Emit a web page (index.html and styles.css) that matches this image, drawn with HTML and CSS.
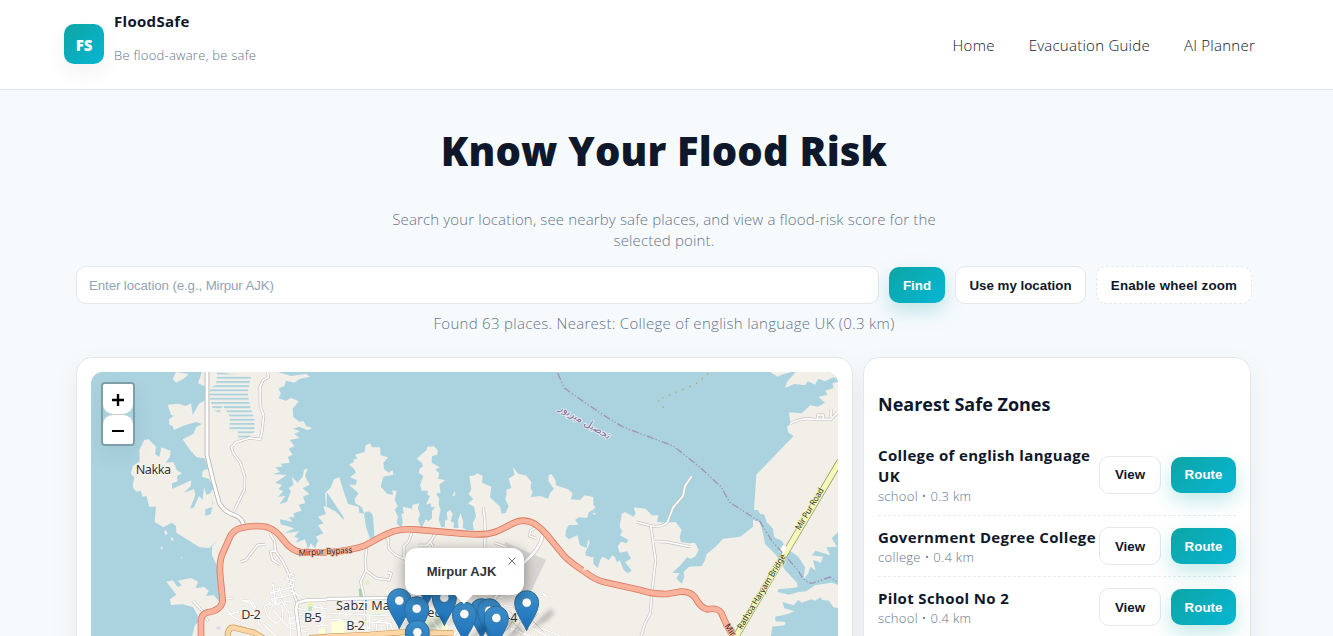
FILE: index.html
```html
<!DOCTYPE html>
<html lang="en">
<head>
    <meta charset="UTF-8">
    <title>FloodSafe</title>
    <link rel="stylesheet" href="styles.css">
</head>
<body>
    <header class="site-header">
        <div class="header-inner">
            <div class="brand">
                <div class="logo">FS</div>
                <div class="brand-text">
                    <div class="brand-name">FloodSafe</div>
                    <div class="brand-tag">Be flood-aware, be safe</div>
                </div>
            </div>
            <nav class="nav">
                <a>Home</a>
                <a>Evacuation Guide</a>
                <a>AI Planner</a>
            </nav>
        </div>
    </header>

    <main class="container">
        <section class="hero">
            <h1>Know Your Flood Risk</h1>
            <p class="lead">Search your location, see nearby safe places, and view a flood-risk score for the<br>selected point.</p>
        </section>

        <div class="search-row">
            <input class="search-input" type="text" placeholder="Enter location (e.g., Mirpur AJK)">
            <button class="btn primary find">Find</button>
            <button class="btn locate">Use my location</button>
            <button class="btn dashed wheel">Enable wheel zoom</button>
        </div>
        <p class="status">Found 63 places. Nearest: College of english language UK (0.3 km)</p>

        <div class="grid">
            <div class="card map-card">
                <div class="map">
                    <svg class="map-svg" viewBox="0 0 2241 792" width="747" height="264">
                        <defs>
                            <pattern id="wetland" width="20" height="12.6" patternUnits="userSpaceOnUse">
                                <rect width="20" height="5.6" fill="#aad3df"/>
                            </pattern>
                            <linearGradient id="pinFill" x1="0" y1="0" x2="0" y2="1">
                                <stop offset="0" stop-color="#3d8fcc"/>
                                <stop offset="1" stop-color="#1a6fb8"/>
                            </linearGradient>
                            <filter id="soft"><feGaussianBlur stdDeviation="7"/></filter>
                            <g id="pin">
                                <path d="M0,0 L45,-45 L72,-68 L84,-55 L60,-30 Z" fill="#000" opacity=".2" filter="url(#soft)"/>
                                <path d="M0,-2 C-8,-24 -36,-56 -36,-86 A36,36 0 0 1 36,-86 C36,-56 8,-24 0,-2 Z" fill="url(#pinFill)" stroke="#2e6c97" stroke-width="3"/>
                                <circle cx="0" cy="-86" r="14" fill="#fff" stroke="#2e6c97" stroke-width="2"/>
                            </g>
                        </defs>
                        <rect width="2241" height="792" fill="#aad3df"/>

                        <!-- west -->
                        <g transform="translate(-45 -36)">
                            <path class="land" d="M388,36 L605,36 L645,48 L690,42 L702,50 L672,56 L655,68 L630,62 L625,78 L607,86 L615,100 L607,115 L630,122 L645,113 L668,124 L650,146 L652,172 L672,186 L682,182 L690,198 L708,204 L696,211 L670,200 L650,206 L672,214 L655,222 L671,234 L641,240 L656,258 L638,266 L650,284 L636,291 L641,308 L614,311 L620,320 L598,322 L612,336 L590,342 L632,345 L598,368 L618,374 L608,388 L622,394 L606,410 L628,408 L611,432 L632,426 L645,394 L638,384 L652,375 L648,350 L664,368 L680,350 L684,330 L695,325 L687,348 L701,374 L680,385 L700,402 L681,410 L688,430 L668,434 L677,452 L652,460 L655,472 L637,472 L650,485 L612,478 L614,493 L655,505 L625,520 L670,514 L655,530 L668,535 L660,548 L686,538 L697,568 L704,550 L717,564 L727,540 L719,530 L742,520 L726,496 L743,490 L726,470 L750,462 L742,440 L757,438 L753,420 L775,412 L765,380 L774,358 L790,352 L810,420 L815,840 L345,840 L357,796 L372,780 L352,742 L320,733 L285,735 L282,718 L301,704 L271,665 L290,661 L306,682 L317,676 L305,662 L345,654 L366,665 L359,685 L384,680 L398,692 L390,708 L413,705 L430,726 L428,690 L424,620 L408,585 L408,560 L421,544 L400,564 L370,562 L340,542 L301,518 L300,498 L287,488 L262,502 L236,486 L240,440 L220,440 L211,408 L200,410 L194,392 L180,395 L170,380 L175,352 L165,342 L170,318 L191,304 L190,270 L204,241 L217,237 L240,260 L237,282 L250,291 L256,262 L284,272 L282,290 L268,308 L292,306 L302,330 L318,340 L303,348 L305,364 L288,370 L288,387 L346,361 L344,378 L324,398 L354,387 L358,404 L342,446 L354,442 L369,408 L380,420 L384,382 L391,404 L404,400 L411,440 L388,448 L388,468 L404,462 L412,430 L402,402 L414,380 L398,356 L378,350 L380,332 L396,326 L386,295 L362,292 L342,270 L320,238 L352,222 L360,202 L378,192 L360,186 L322,197 L294,210 L290,198 L280,194 L279,178 L293,168 L285,164 L275,134 L306,131 L330,138 L345,130 L350,165 L370,130 L386,122 Z"/>
                            <path class="land" d="M290,58 L300,36 L338,42 L325,55 L300,68 Z M366,70 L378,36 L390,36 L390,80 Z"/>
                            <path class="land" d="M264,515 l6,-4 5,10 -6,4 Z M284,532 l7,2 1,10 -6,-3 Z M252,563 l9,-3 -4,9 Z M316,590 l3,6 -4,-1 Z"/>
                            <path fill="url(#wetland)" d="M424,36 L525,50 L515,100 L522,140 L535,175 L536,214 L512,240 L488,238 L485,214 L460,210 L462,170 L440,136 L430,158 L412,150 L400,110 L402,84 L420,75 Z"/>

                            <rect x="695" y="727" width="14" height="14" fill="#eef7a9"/>
                            <rect x="697" y="739" width="11" height="14" fill="#b5e7c3"/>
                            <path d="M730,808 L748,802 L746,830 L726,830 Z" fill="#feffd9"/>
                            <path d="M422,800 h12 v8 h-12 Z" fill="#e3d2e6"/>

                            <g class="street-case">
                                <path d="M575,36 L577,52 L562,60 L552,80 L553,140 L563,166 L558,215 L552,238 L520,234 L480,247 L466,262 L472,280 L493,308 L506,350 L505,390 L473,455"/>
                                <path d="M493,606 L510,600 L545,555 L568,553"/>
                                <path d="M583,522 L596,545 L598,572 L622,607 L640,645 L652,700 L665,730"/>
                                <path d="M598,572 L583,575 L590,600 L612,614"/>
                                <path d="M350,722 L378,752 L397,785"/>
                            </g>
                            <g class="street">
                                <path d="M575,36 L577,52 L562,60 L552,80 L553,140 L563,166 L558,215 L552,238 L520,234 L480,247 L466,262 L472,280 L493,308 L506,350 L505,390 L473,455"/>
                                <path d="M493,606 L510,600 L545,555 L568,553"/>
                                <path d="M583,522 L596,545 L598,572 L622,607 L640,645 L652,700 L665,730"/>
                                <path d="M598,572 L583,575 L590,600 L612,614"/>
                                <path d="M350,722 L378,752 L397,785"/>
                            </g>
                            <g class="lane">
                                <path d="M440,716 H470 M440,735 L470,770 L500,785 L540,828 M450,765 L490,755 M498,722 L525,730 L545,765 L550,800 M500,722 Q530,715 540,745 M480,790 L520,820 M505,740 L498,775 L535,770"/>
                                <path d="M565,740 L590,722 L618,740 L620,775 L600,790 L575,770 Z M590,750 L640,805 M560,790 L600,830 M615,720 L640,760 L645,828"/>
                                <path d="M580,700 L655,680 M583,718 L660,700 M590,670 L600,735 M610,680 L618,715 M632,640 L655,648 M628,655 L658,662 M636,670 L655,676 M640,690 L680,712 M575,735 L650,722"/>
                                <path d="M665,745 L690,750 M665,762 L680,765 M660,780 L690,785 M664,797 L690,800 M668,812 L695,814 M640,775 L668,772 M640,790 L668,788 M642,806 L668,803 M738,735 V800 M755,725 V820 M710,740 L780,752 M738,770 L780,776 M720,795 L780,800"/>
                            </g>
                            <path class="main-case" d="M393,30 L393,285 L412,365 L430,430 Q445,455 472,464 Q498,472 503,496"/>
                            <path class="main" d="M393,30 L393,285 L412,365 L430,430 Q445,455 472,464 Q498,472 503,496"/>
                            <path class="local-case" d="M790,719 L690,721 L665,728 L660,745 L672,840"/>
                            <path class="local" d="M790,719 L690,721 L665,728 L660,745 L672,840"/>
                            <path class="secondary-case" d="M455,840 Q452,800 475,803 L535,818 L570,840 M700,834 L800,828"/>
                            <path class="secondary" d="M455,840 Q452,800 475,803 L535,818 L570,840 M700,834 L800,828"/>
                            <path class="trunk-case" d="M375,840 L375,785 Q375,764 392,758 Q436,752 440,722 L432,640 Q430,600 440,580 L460,535 Q470,510 495,504 Q540,493 575,502 Q600,510 622,540 Q650,577 680,577 L763,577"/>
                            <path class="trunk" d="M375,840 L375,785 Q375,764 392,758 Q436,752 440,722 L432,640 Q430,600 440,580 L460,535 Q470,510 495,504 Q540,493 575,502 Q600,510 622,540 Q650,577 680,577 L763,577"/>
                        </g>

                        <!-- center -->
                        <g transform="translate(717 -36)">
                            <path class="land" d="M-15,400 L10,375 L12,356 L30,372 L42,398 L54,432 L86,440 L88,458 L104,462 L94,440 L76,430 L74,416 L86,400 L57,374 L78,374 L80,360 L60,352 L78,338 L72,326 L57,314 L72,306 L70,296 L82,298 L75,284 L104,276 L107,256 L120,250 L126,262 L150,262 L152,286 L174,292 L160,308 L162,328 L176,338 L188,330 L190,344 L160,350 L152,380 L172,402 L190,404 L186,390 L200,394 L194,420 L203,438 L194,450 L204,470 L200,490 L214,504 L218,484 L214,462 L222,460 L218,440 L246,446 L248,434 L268,430 L264,446 L270,462 L264,480 L274,504 L284,486 L286,478 L296,484 L306,474 L306,452 L316,440 L304,442 L302,430 L288,434 L300,408 L292,404 L294,392 L276,392 L270,376 L280,348 L266,338 L270,324 L278,320 L276,308 L260,296 L290,270 L292,260 L312,259 L323,270 L322,284 L306,288 L305,308 L330,322 L316,328 L328,340 L324,356 L346,360 L328,374 L332,398 L318,400 L328,416 L326,434 L332,450 L326,478 L334,502 L345,500 L345,482 L353,478 L350,458 L360,449 L368,462 L362,484 L372,488 L370,503 L386,504 L384,480 L392,460 L400,486 L398,504 L412,511 L432,511 L428,490 L438,470 L432,440 L414,430 L430,418 L416,402 L424,388 L418,348 L436,346 L440,339 L458,348 L456,368 L484,380 L480,412 L494,425 L510,440 L515,462 L528,458 L536,438 L526,418 L530,402 L528,390 L544,384 L536,356 L554,344 L548,322 L566,342 L588,346 L604,366 L602,384 L608,396 L602,412 L630,408 L654,416 L662,396 L672,388 L655,362 L656,346 L664,342 L676,360 L678,376 L714,388 L728,400 L722,418 L750,420 L764,406 L790,412 L790,840 L-10,840 L-10,470 Z"/>
                            <path class="water" d="M103,470 Q102,452 118,455 Q130,460 130,480 L133,530 L120,536 L108,500 Z M-10,395 L40,470 L42,480 L18,455 L-10,440 Z"/>
                            <path class="land" d="M374,392 l2,14 -9,3 Z"/>
                            <path class="water" d="M790,448 L776,452 L772,474 L746,472 L735,480 L746,494 L716,496 L708,510 L706,528 L716,538 L742,526 L750,556 L770,564 L774,540 L790,530 Z M790,560 L782,562 L766,588 L784,588 Z"/>
                            <path d="M526,546 L648,600 L600,700 L480,680 Z" fill="#d9d5d2"/>
                            <path d="M86,686 L100,684 L103,712 L88,712 Z" fill="#aad0af"/>
                            <circle cx="112" cy="668" r="8" fill="#e7eecb"/>
                            <path d="M4,785 L45,782 L48,818 L6,820 Z M325,790 L355,795 L352,812 L325,808 Z" fill="#feffd9"/>
                            <path d="M275,772 L330,766 L338,806 L280,802 Z" fill="#dbe8cf"/>

                            <g class="street-case">
                                <path d="M110,562 L106,600 L108,630 L92,665 L98,690 L103,715 L103,790"/>
                                <path d="M106,630 L140,655 L178,660 L184,640 L172,638"/>
                                <path d="M174,528 L176,565 L196,585 L230,600 M246,516 L236,545 L222,558 L222,595 M316,520 L305,540 L290,556 L265,556 M300,545 L310,560"/>
                                <path d="M460,442 L465,490 L464,640 M494,548 L530,562 M618,502 L602,512 L598,528 L620,535"/>
                            </g>
                            <g class="street">
                                <path d="M110,562 L106,600 L108,630 L92,665 L98,690 L103,715 L103,790"/>
                                <path d="M106,630 L140,655 L178,660 L184,640 L172,638"/>
                                <path d="M174,528 L176,565 L196,585 L230,600 M246,516 L236,545 L222,558 L222,595 M316,520 L305,540 L290,556 L265,556 M300,545 L310,560"/>
                                <path d="M460,442 L465,490 L464,640 M494,548 L530,562 M618,502 L602,512 L598,528 L620,535"/>
                            </g>
                            <g class="lane">
                                <path d="M0,735 L20,735 M0,760 L180,768 M0,778 L185,790 M60,725 V760 M120,765 L118,812 M140,812 Q135,782 156,780 Q178,782 172,812 M156,795 v20 M180,790 L190,812 M70,800 L130,806"/>
                                <path d="M305,760 L380,765 M305,780 L330,812 M370,790 Q392,800 372,828 M420,700 L520,705 M500,715 L560,700 L590,720 M520,735 L570,745 M515,820 L560,770 M530,800 L600,828 M560,780 L650,828 M540,820 L580,750 M630,690 L655,716 M625,712 L650,705 M600,790 L690,828 M590,815 L640,760"/>
                            </g>
                            <path class="local-case" d="M-10,717 L180,714 M636,528 Q635,560 585,605 L490,720"/>
                            <path class="local" d="M-10,717 L180,714 M636,528 Q635,560 585,605 L490,720"/>
                            <g stroke="#c9c4c0" stroke-width="3">
                                <path d="M548,740 L600,790 M536,752 L596,808 M530,768 L580,818 M556,728 L640,815 M530,810 L580,735 M548,820 L600,745 M570,828 L625,760"/>
                            </g>
                            <path class="secondary-case" d="M-10,830 L120,824 L240,815 L370,820"/>
                            <path class="secondary" d="M-10,830 L120,824 L240,815 L370,820"/>
                            <path class="trunk-case" d="M0,577 Q70,570 105,557 Q160,525 190,514 Q220,505 260,509 L400,521 Q465,527 495,516 Q515,509 545,492 Q580,472 615,492 Q635,505 650,524 L700,585 Q715,603 766,637"/>
                            <path class="trunk" d="M-3,577 Q70,570 105,557 Q160,525 190,514 Q220,505 260,509 L400,521 Q465,527 495,516 Q515,509 545,492 Q580,472 615,492 Q635,505 650,524 L700,585 Q715,603 766,637"/>
                        </g>

                        <!-- east -->
                        <g transform="translate(1482 -36)">
                            <path class="water" d="M24,460 H120 V560 L24,575 Z"/>
                            <path class="land" d="M-5,412 L14,408 L18,428 L32,442 L10,458 L-5,452 Z M22,460 l10,-2 -3,7 Z"/>
                            <path class="water" d="M24,470 L6,520 L14,550 L0,580 L16,592 L26,590 Z"/>
                            <path class="land" d="M0,590 L12,596 L8,616 L26,612 L38,624 L46,600 L52,590 L72,600 L82,586 L90,592 L96,608 L104,600 L116,630 L128,640 L140,632 L120,606 L138,596 L126,574 L104,578 L98,558 L108,545 L124,550 L130,540 L105,526 L112,515 L104,500 L110,462 L120,456 L145,470 L152,462 L146,442 L182,446 L200,466 L220,466 L216,486 L244,488 L272,486 L290,510 L284,530 L288,546 L312,550 L330,548 L341,570 L332,588 L318,596 L306,592 L290,612 L262,638 L284,640 L274,655 L290,671 L298,650 L296,636 L312,620 L350,618 L360,600 L365,582 L392,560 L414,536 L466,530 L504,500 L504,480 L524,486 L534,520 L540,552 L574,586 L600,630 L636,668 L638,682 L622,684 L580,688 L578,696 L612,704 L640,696 L664,694 L690,676 L740,668 L765,676 L765,745 L745,742 L732,722 L712,720 L706,712 L690,722 L680,718 L650,728 L640,720 L626,736 L592,726 L598,745 L628,754 L608,762 L570,770 L572,784 L602,786 L598,796 L562,800 L556,840 L-5,840 L-5,640 Z"/>
                            <path class="land" d="M765,64 L742,70 L746,84 L720,92 L728,104 L700,110 L720,128 L698,140 L676,136 L650,160 L612,157 L616,192 L606,200 L610,218 L626,228 L514,344 L507,450 L518,450 L526,462 L538,464 L545,486 L564,506 L568,532 L590,542 L606,566 L640,590 L660,622 L656,658 L670,640 L676,620 L692,632 L684,600 L708,608 L714,590 L680,586 L692,572 L736,586 L724,562 L756,560 L740,535 L765,510 Z"/>
                            <path class="land" d="M555,36 L578,50 L590,44 L618,36 Z M632,36 L606,66 L600,84 L628,72 L660,76 L668,64 L690,74 L700,56 L720,64 L745,52 L765,60 L765,36 Z"/>
                            <path class="street-case" d="M320,349 L300,378 L294,408 L264,443 L248,485 Q235,502 200,498 L155,486 M197,498 L212,600 L200,700 L196,760 L180,790 L165,840 M204,544 L245,546 L315,560 M617,190 Q650,172 690,178 L738,178 L760,155 M698,178 V165 H715 V178 M738,172 V148"/>
                            <path class="street" d="M320,349 L300,378 L294,408 L264,443 L248,485 Q235,502 200,498 L155,486 M197,498 L212,600 L200,700 L196,760 L180,790 L165,840 M204,544 L245,546 L315,560 M617,190 Q650,172 690,178 L738,178 L760,155 M698,178 V165 H715 V178 M738,172 V148"/>
                            <path class="trunk-case" d="M0,636 Q30,660 60,667 L165,690 Q205,703 245,702 L285,695 Q315,693 330,712 Q348,745 368,748 Q395,742 408,757 L425,795 L452,840"/>
                            <path class="trunk" d="M-4,633 Q30,660 60,667 L165,690 Q205,703 245,702 L285,695 Q315,693 330,712 Q348,745 368,748 Q395,742 408,757 L425,795 L452,840"/>
                            <path class="yellow-case" d="M765,303 L450,834"/>
                            <path class="yellow" d="M765,303 L450,834"/>
                            <path d="M601,558 L588,578" stroke="#fff" stroke-width="15"/>
                            <path class="boundary" d="M-82,40 L-62,84 L0,128 L60,168 L112,200 L265,258 L345,322 L408,380 L434,427 L525,485 L560,542 L640,632 Q655,665 680,670 Q705,662 735,651 L765,672"/>
                            <path d="M370,40 L335,70 L300,86 L218,120 L232,134 L242,160" fill="none" stroke="#b5a878" stroke-width="4" stroke-dasharray="5 17"/>
                        </g>

                        <!-- labels -->
                        <g class="label">
                            <text x="134" y="306" textLength="106">Nakka</text>
                            <text x="451" y="740" textLength="58">D-2</text>
                            <text x="639" y="750" textLength="53">B-5</text>
                            <text x="735" y="714" textLength="178">Sabzi Mar</text>
                            <text x="766" y="774" textLength="55">B-2</text>
                            <text x="1009" y="734">ec</text>
                            <text x="1226" y="749">F-4</text>
                        </g>
                        <text class="road-label trunk-label" transform="translate(623 551) rotate(-3)" textLength="162">Mirpur Bypass</text>
                        <text class="road-label trunk-label" transform="translate(1900 762) rotate(56)">Mir</text>
                        <text class="road-label yellow-label" transform="translate(2126 476) rotate(-59)" textLength="142">Mir Pur Road</text>
                        <text class="road-label yellow-label" transform="translate(1952 774) rotate(-59)" textLength="258">Rathoa Haryam Bridge</text>
                        <text class="area-label" transform="translate(1401 112) rotate(31)" textLength="176">تحصيل میرپور</text>

                        <g transform="translate(717 -36)">
                            <use href="#pin" x="291" y="738"/>
                            <use href="#pin" x="343" y="799"/>
                            <use href="#pin" x="208" y="808"/>
                            <use href="#pin" x="590" y="814"/>
                            <use href="#pin" x="260" y="832"/>
                            <use href="#pin" x="455" y="838"/>
                            <use href="#pin" x="478" y="838"/>
                            <use href="#pin" x="403" y="848"/>
                            <use href="#pin" x="499" y="860"/>
                            <use href="#pin" x="262" y="903"/>
                        </g>
                    </svg>

                    <div class="zoom-control">
                        <button class="zoom-btn"><svg width="14" height="14"><path d="M1,7 H13 M7,1 V13" stroke="#000" stroke-width="2.4"/></svg></button>
                        <button class="zoom-btn"><svg width="14" height="14"><path d="M1,7 H13" stroke="#000" stroke-width="2"/></svg></button>
                    </div>
                    <div class="popup">
                        <b>Mirpur AJK</b>
                        <svg class="popup-close" width="8" height="8"><path d="M.5,.5 L7.5,7.5 M7.5,.5 L.5,7.5" stroke="#757575"/></svg>
                    </div>
                </div>
            </div>

            <aside class="card side">
                <h3>Nearest Safe Zones</h3>
                <div class="zone">
                    <div class="zone-info">
                        <div class="zone-name">College of english language<br>UK</div>
                        <div class="zone-meta">school • 0.3 km</div>
                    </div>
                    <button class="btn view">View</button>
                    <button class="btn primary route">Route</button>
                </div>
                <div class="zone">
                    <div class="zone-info">
                        <div class="zone-name">Government Degree College</div>
                        <div class="zone-meta">college • 0.4 km</div>
                    </div>
                    <button class="btn view">View</button>
                    <button class="btn primary route">Route</button>
                </div>
                <div class="zone">
                    <div class="zone-info">
                        <div class="zone-name">Pilot School No 2</div>
                        <div class="zone-meta">school • 0.4 km</div>
                    </div>
                    <button class="btn view">View</button>
                    <button class="btn primary route">Route</button>
                </div>
            </aside>
        </div>
    </main>
</body>
</html>
```
FILE: styles.css
```css
* {
    box-sizing: border-box;
}

html, body {
    height: 100%;
    overflow: hidden;
}

body {
    margin: 0;
    background: #f7fafd;
    color: #0f172a;
    font-family: "Open Sans", "Noto Sans", sans-serif;
    font-size: 15px;
    font-weight: 300;
}

.site-header {
    height: 90px;
    padding-right: 5px;
    background: #fff;
    border-bottom: 1px solid #e2e6ec;
}

.header-inner {
    width: 1200px;
    height: 88px;
    margin: 0 auto;
    display: flex;
    justify-content: space-between;
    align-items: center;
}

.brand {
    display: flex;
    align-items: center;
    gap: 10px;
}

.logo {
    width: 40px;
    height: 40px;
    border-radius: 10px;
    background: linear-gradient(135deg, #0ea5a4, #06b6d4);
    color: #fff;
    font-size: 15px;
    font-weight: 800;
    line-height: 42px;
    text-align: center;
    box-shadow: 0 8px 24px rgba(2, 6, 23, 0.06);
}

.brand-text {
    display: flex;
    flex-direction: column;
    gap: 14px;
    padding-bottom: 13px;
}

.brand-name {
    font-weight: 700;
    line-height: 21px;
    letter-spacing: 0.3px;
}

.brand-tag {
    font-size: 13px;
    line-height: 19px;
    color: #64748b;
    letter-spacing: 0.25px;
}

.nav {
    display: flex;
    gap: 34px;
    padding: 1px 9px 0 0;
    letter-spacing: 0.25px;
}

.container {
    width: 1181px;
    margin: 0 auto;
    padding-right: 5px;
}

.hero {
    text-align: center;
}

h1 {
    margin: 0;
    padding-top: 34px;
    font-size: 40px;
    font-weight: 800;
    line-height: 53px;
    letter-spacing: 0.15px;
}

.lead {
    margin: 32px 0 0;
    color: #64748b;
    line-height: 21px;
    letter-spacing: 0.15px;
}

.search-row {
    display: flex;
    align-items: center;
    gap: 10px;
    margin-top: 15px;
}

.search-input {
    flex: 1;
    height: 38px;
    padding: 0 12px;
    border: 1px solid #e5e7eb;
    border-radius: 10px;
    background: #fff;
    font-family: "Liberation Sans", sans-serif;
    font-size: 13.33px;
    letter-spacing: -0.12px;
}

.search-input::placeholder {
    color: #94a3b8;
}

.btn {
    height: 38px;
    padding: 0;
    border: 1px solid #e5e7eb;
    border-radius: 10px;
    background: #fff;
    color: #0f172a;
    font-family: "Liberation Sans", sans-serif;
    font-size: 13.33px;
    font-weight: 700;
    flex-shrink: 0;
}

.btn.primary {
    height: 36px;
    border: none;
    color: #fff;
    background: linear-gradient(135deg, #0ea5a4, #06b6d4);
    box-shadow: 0 8px 20px rgba(14, 165, 164, 0.25);
}

.btn.dashed {
    border-style: dashed;
}

.find {
    width: 56px;
}

.locate {
    width: 131px;
}

.wheel {
    width: 156px;
    letter-spacing: 0.2px;
}

.status {
    margin: 9px 0 0;
    color: #64748b;
    text-align: center;
    line-height: 21px;
    letter-spacing: 0.3px;
}

.grid {
    display: grid;
    grid-template-columns: 777px 388px;
    gap: 10px;
    margin-top: 23px;
}

.card {
    height: 560px;
    padding: 14px;
    border: 1px solid #e5e7eb;
    border-radius: 16px;
    background: #fff;
    box-shadow: 0 10px 30px rgba(2, 6, 23, 0.06);
}

.map {
    position: relative;
    height: 530px;
    border-radius: 12px;
    overflow: hidden;
    background: #aad3df;
}

.map-svg {
    display: block;
    fill: none;
    stroke-linejoin: round;
}

.land {
    fill: #f2efe9;
}

.water {
    fill: #aad3df;
}

.street-case {
    fill: none;
    stroke: #c4c1be;
    stroke-width: 9;
}

.street {
    fill: none;
    stroke: #fff;
    stroke-width: 5;
}

.lane {
    stroke: #fff;
    stroke-width: 5;
    filter: drop-shadow(0 0 1px #aaa6a2);
}

.main-case {
    stroke: #b5b2ae;
    stroke-width: 14;
}

.main {
    stroke: #fff;
    stroke-width: 9;
}

.local-case {
    stroke: #c4c1be;
    stroke-width: 12;
}

.local {
    stroke: #fff;
    stroke-width: 8;
}

.secondary-case {
    stroke: #c79a55;
    stroke-width: 18;
}

.secondary {
    stroke: #fcd6a4;
    stroke-width: 14;
}

.trunk-case {
    stroke: #d9795f;
    stroke-width: 20;
}

.trunk {
    stroke: #f9b29c;
    stroke-width: 15;
}

.yellow-case {
    stroke: #8d9250;
    stroke-width: 20;
}

.yellow {
    stroke: #f5f9bb;
    stroke-width: 16;
}

.boundary {
    stroke: #a192b4;
    stroke-width: 4;
    stroke-dasharray: 22 6 4 6 4 6;
}

.label {
    font-family: "Noto Sans", sans-serif;
    font-size: 38px;
    font-weight: 400;
    fill: #333;
    stroke: rgba(255, 255, 255, 0.6);
    stroke-width: 5;
    paint-order: stroke;
}

.road-label {
    font-family: "Noto Sans", sans-serif;
    font-size: 25px;
    font-weight: 400;
    fill: #2b2b1e;
    stroke-width: 5;
    paint-order: stroke;
}

.trunk-label {
    stroke: #f9b29c;
}

.yellow-label {
    stroke: #f5f9bb;
}

.area-label {
    font-family: "DejaVu Sans", sans-serif;
    font-size: 32px;
    font-weight: 400;
    fill: #8d6b98;
    stroke: rgba(255, 255, 255, 0.7);
    stroke-width: 5;
    paint-order: stroke;
}

.zoom-control {
    position: absolute;
    top: 10px;
    left: 10px;
    width: 34px;
    border: 2px solid rgba(0, 0, 0, 0.25);
    border-radius: 4px;
    box-shadow: 0 8px 24px rgba(2, 6, 23, 0.06);
}

.zoom-btn {
    display: flex;
    align-items: center;
    justify-content: center;
    width: 30px;
    height: 30px;
    padding: 2px 0 0;
    border: none;
    border-radius: 2px 2px 10px 10px;
    background: #fff;
}

.zoom-btn + .zoom-btn {
    border-top: 1px solid #ccc;
    border-radius: 10px 10px 2px 2px;
}

.popup {
    position: absolute;
    left: 314px;
    top: 176px;
    width: 119px;
    height: 47px;
    border-radius: 12px;
    background: #fff;
    color: #333;
    font: 13px/47px "Liberation Sans", sans-serif;
    text-align: center;
    padding-right: 6px;
    box-shadow: 0 3px 14px rgba(0, 0, 0, 0.4);
}

/* popup tip */
.popup::after {
    content: "";
    position: absolute;
    left: 49px;
    top: 46px;
    border: 10px solid transparent;
    border-top-color: #fff;
    border-bottom: none;
}

.popup-close {
    position: absolute;
    right: 8px;
    top: 9px;
}

h3 {
    margin: 20px 0 17px;
    font-size: 18px;
    font-weight: 700;
    line-height: 25px;
}

.zone {
    display: flex;
    align-items: center;
    padding: 11px 0 9px;
    border-bottom: 1px dashed #e9edf1;
}

.zone .btn {
    margin-top: -2px;
}

.zone-info {
    flex: 1;
    width: 0;
    white-space: nowrap;
}

.zone-name {
    font-weight: 700;
    line-height: 21px;
    letter-spacing: 0.35px;
}

.zone-meta {
    font-size: 13px;
    line-height: 19px;
    color: #64748b;
    letter-spacing: 0.3px;
}

.view {
    width: 62px;
    margin-right: 10px;
}

.route {
    width: 65px;
}
```
